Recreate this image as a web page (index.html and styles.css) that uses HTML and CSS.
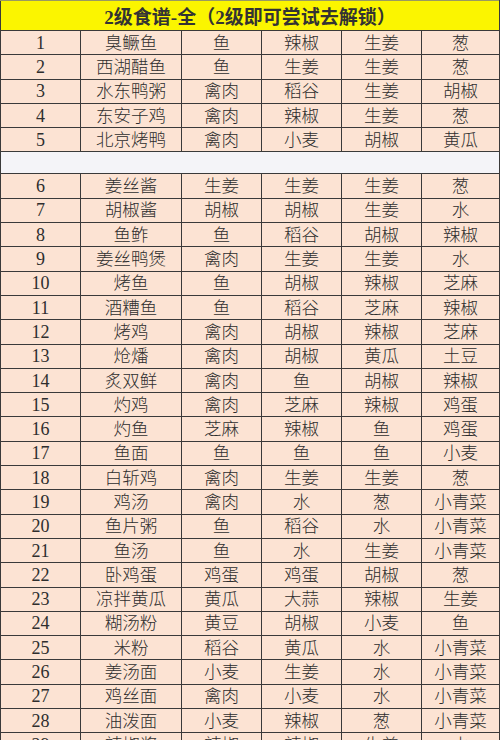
FILE: index.html
```html
<!DOCTYPE html>
<html lang="zh">
<head>
<meta charset="utf-8">
<link rel="stylesheet" href="styles.css">
</head>
<body>
<table class="recipes">
  <colgroup>
    <col class="c-num"><col class="c-name"><col class="c-i"><col class="c-i"><col class="c-i"><col class="c-last">
  </colgroup>
  <thead>
    <tr class="title"><th colspan="6">2级食谱-全（2级即可尝试去解锁）</th></tr>
  </thead>
  <tbody>
    <tr><td class="n">1</td><td>臭鳜鱼</td><td>鱼</td><td>辣椒</td><td>生姜</td><td>葱</td></tr>
    <tr><td class="n">2</td><td>西湖醋鱼</td><td>鱼</td><td>生姜</td><td>生姜</td><td>葱</td></tr>
    <tr><td class="n">3</td><td>水东鸭粥</td><td>禽肉</td><td>稻谷</td><td>生姜</td><td>胡椒</td></tr>
    <tr><td class="n">4</td><td>东安子鸡</td><td>禽肉</td><td>辣椒</td><td>生姜</td><td>葱</td></tr>
    <tr><td class="n">5</td><td>北京烤鸭</td><td>禽肉</td><td>小麦</td><td>胡椒</td><td>黄瓜</td></tr>
    <tr class="gap"><td colspan="6"></td></tr>
    <tr><td class="n">6</td><td>姜丝酱</td><td>生姜</td><td>生姜</td><td>生姜</td><td>葱</td></tr>
    <tr><td class="n">7</td><td>胡椒酱</td><td>胡椒</td><td>胡椒</td><td>生姜</td><td>水</td></tr>
    <tr><td class="n">8</td><td>鱼鲊</td><td>鱼</td><td>稻谷</td><td>胡椒</td><td>辣椒</td></tr>
    <tr><td class="n">9</td><td>姜丝鸭煲</td><td>禽肉</td><td>生姜</td><td>生姜</td><td>水</td></tr>
    <tr><td class="n">10</td><td>烤鱼</td><td>鱼</td><td>胡椒</td><td>辣椒</td><td>芝麻</td></tr>
    <tr><td class="n">11</td><td>酒糟鱼</td><td>鱼</td><td>稻谷</td><td>芝麻</td><td>辣椒</td></tr>
    <tr><td class="n">12</td><td>烤鸡</td><td>禽肉</td><td>胡椒</td><td>辣椒</td><td>芝麻</td></tr>
    <tr><td class="n">13</td><td>炝燔</td><td>禽肉</td><td>胡椒</td><td>黄瓜</td><td>土豆</td></tr>
    <tr><td class="n">14</td><td>炙双鲜</td><td>禽肉</td><td>鱼</td><td>胡椒</td><td>辣椒</td></tr>
    <tr><td class="n">15</td><td>灼鸡</td><td>禽肉</td><td>芝麻</td><td>辣椒</td><td>鸡蛋</td></tr>
    <tr><td class="n">16</td><td>灼鱼</td><td>芝麻</td><td>辣椒</td><td>鱼</td><td>鸡蛋</td></tr>
    <tr><td class="n">17</td><td>鱼面</td><td>鱼</td><td>鱼</td><td>鱼</td><td>小麦</td></tr>
    <tr><td class="n">18</td><td>白斩鸡</td><td>禽肉</td><td>生姜</td><td>生姜</td><td>葱</td></tr>
    <tr><td class="n">19</td><td>鸡汤</td><td>禽肉</td><td>水</td><td>葱</td><td>小青菜</td></tr>
    <tr><td class="n">20</td><td>鱼片粥</td><td>鱼</td><td>稻谷</td><td>水</td><td>小青菜</td></tr>
    <tr><td class="n">21</td><td>鱼汤</td><td>鱼</td><td>水</td><td>生姜</td><td>小青菜</td></tr>
    <tr><td class="n">22</td><td>卧鸡蛋</td><td>鸡蛋</td><td>鸡蛋</td><td>胡椒</td><td>葱</td></tr>
    <tr><td class="n">23</td><td>凉拌黄瓜</td><td>黄瓜</td><td>大蒜</td><td>辣椒</td><td>生姜</td></tr>
    <tr><td class="n">24</td><td>糊汤粉</td><td>黄豆</td><td>胡椒</td><td>小麦</td><td>鱼</td></tr>
    <tr><td class="n">25</td><td>米粉</td><td>稻谷</td><td>黄瓜</td><td>水</td><td>小青菜</td></tr>
    <tr><td class="n">26</td><td>姜汤面</td><td>小麦</td><td>生姜</td><td>水</td><td>小青菜</td></tr>
    <tr><td class="n">27</td><td>鸡丝面</td><td>禽肉</td><td>小麦</td><td>水</td><td>小青菜</td></tr>
    <tr><td class="n">28</td><td>油泼面</td><td>小麦</td><td>辣椒</td><td>葱</td><td>小青菜</td></tr>
    <tr><td class="n">29</td><td>辣椒酱</td><td>辣椒</td><td>辣椒</td><td>生姜</td><td>水</td></tr>
  </tbody>
</table>
</body>
</html>
```
FILE: styles.css
```css
html, body {
  margin: 0;
  padding: 0;
  background: #ffffff;
  overflow: hidden;
}

.recipes {
  border-collapse: collapse;
  table-layout: fixed;
  width: 499px;
  font-family: "Liberation Serif", "Noto Sans CJK SC", serif;
  color: #2e2e2e;
}

.c-num { width: 80px; }
.c-name { width: 101px; }
.c-i { width: 80px; }
.c-last { width: 78px; }

.recipes th,
.recipes td {
  border: 1.5px solid #3a3a3a;
  padding: 0;
  text-align: center;
  vertical-align: middle;
  white-space: nowrap;
  overflow: hidden;
}

.title th {
  height: 29px;
  background: #fbf500;
  font-size: 19px;
  font-weight: bold;
  color: #333;
  border-top: 1px solid #9a9a60;
}

.recipes tbody td {
  height: 23.3px;
  background: #fce3d3;
  font-size: 17.5px;
  font-weight: 300;
  line-height: 20px;
}

.recipes tbody td.n {
  font-size: 18px;
  font-weight: normal;
}

.recipes tbody .gap td {
  height: 21px;
  background: #f4f4f8;
}
```
